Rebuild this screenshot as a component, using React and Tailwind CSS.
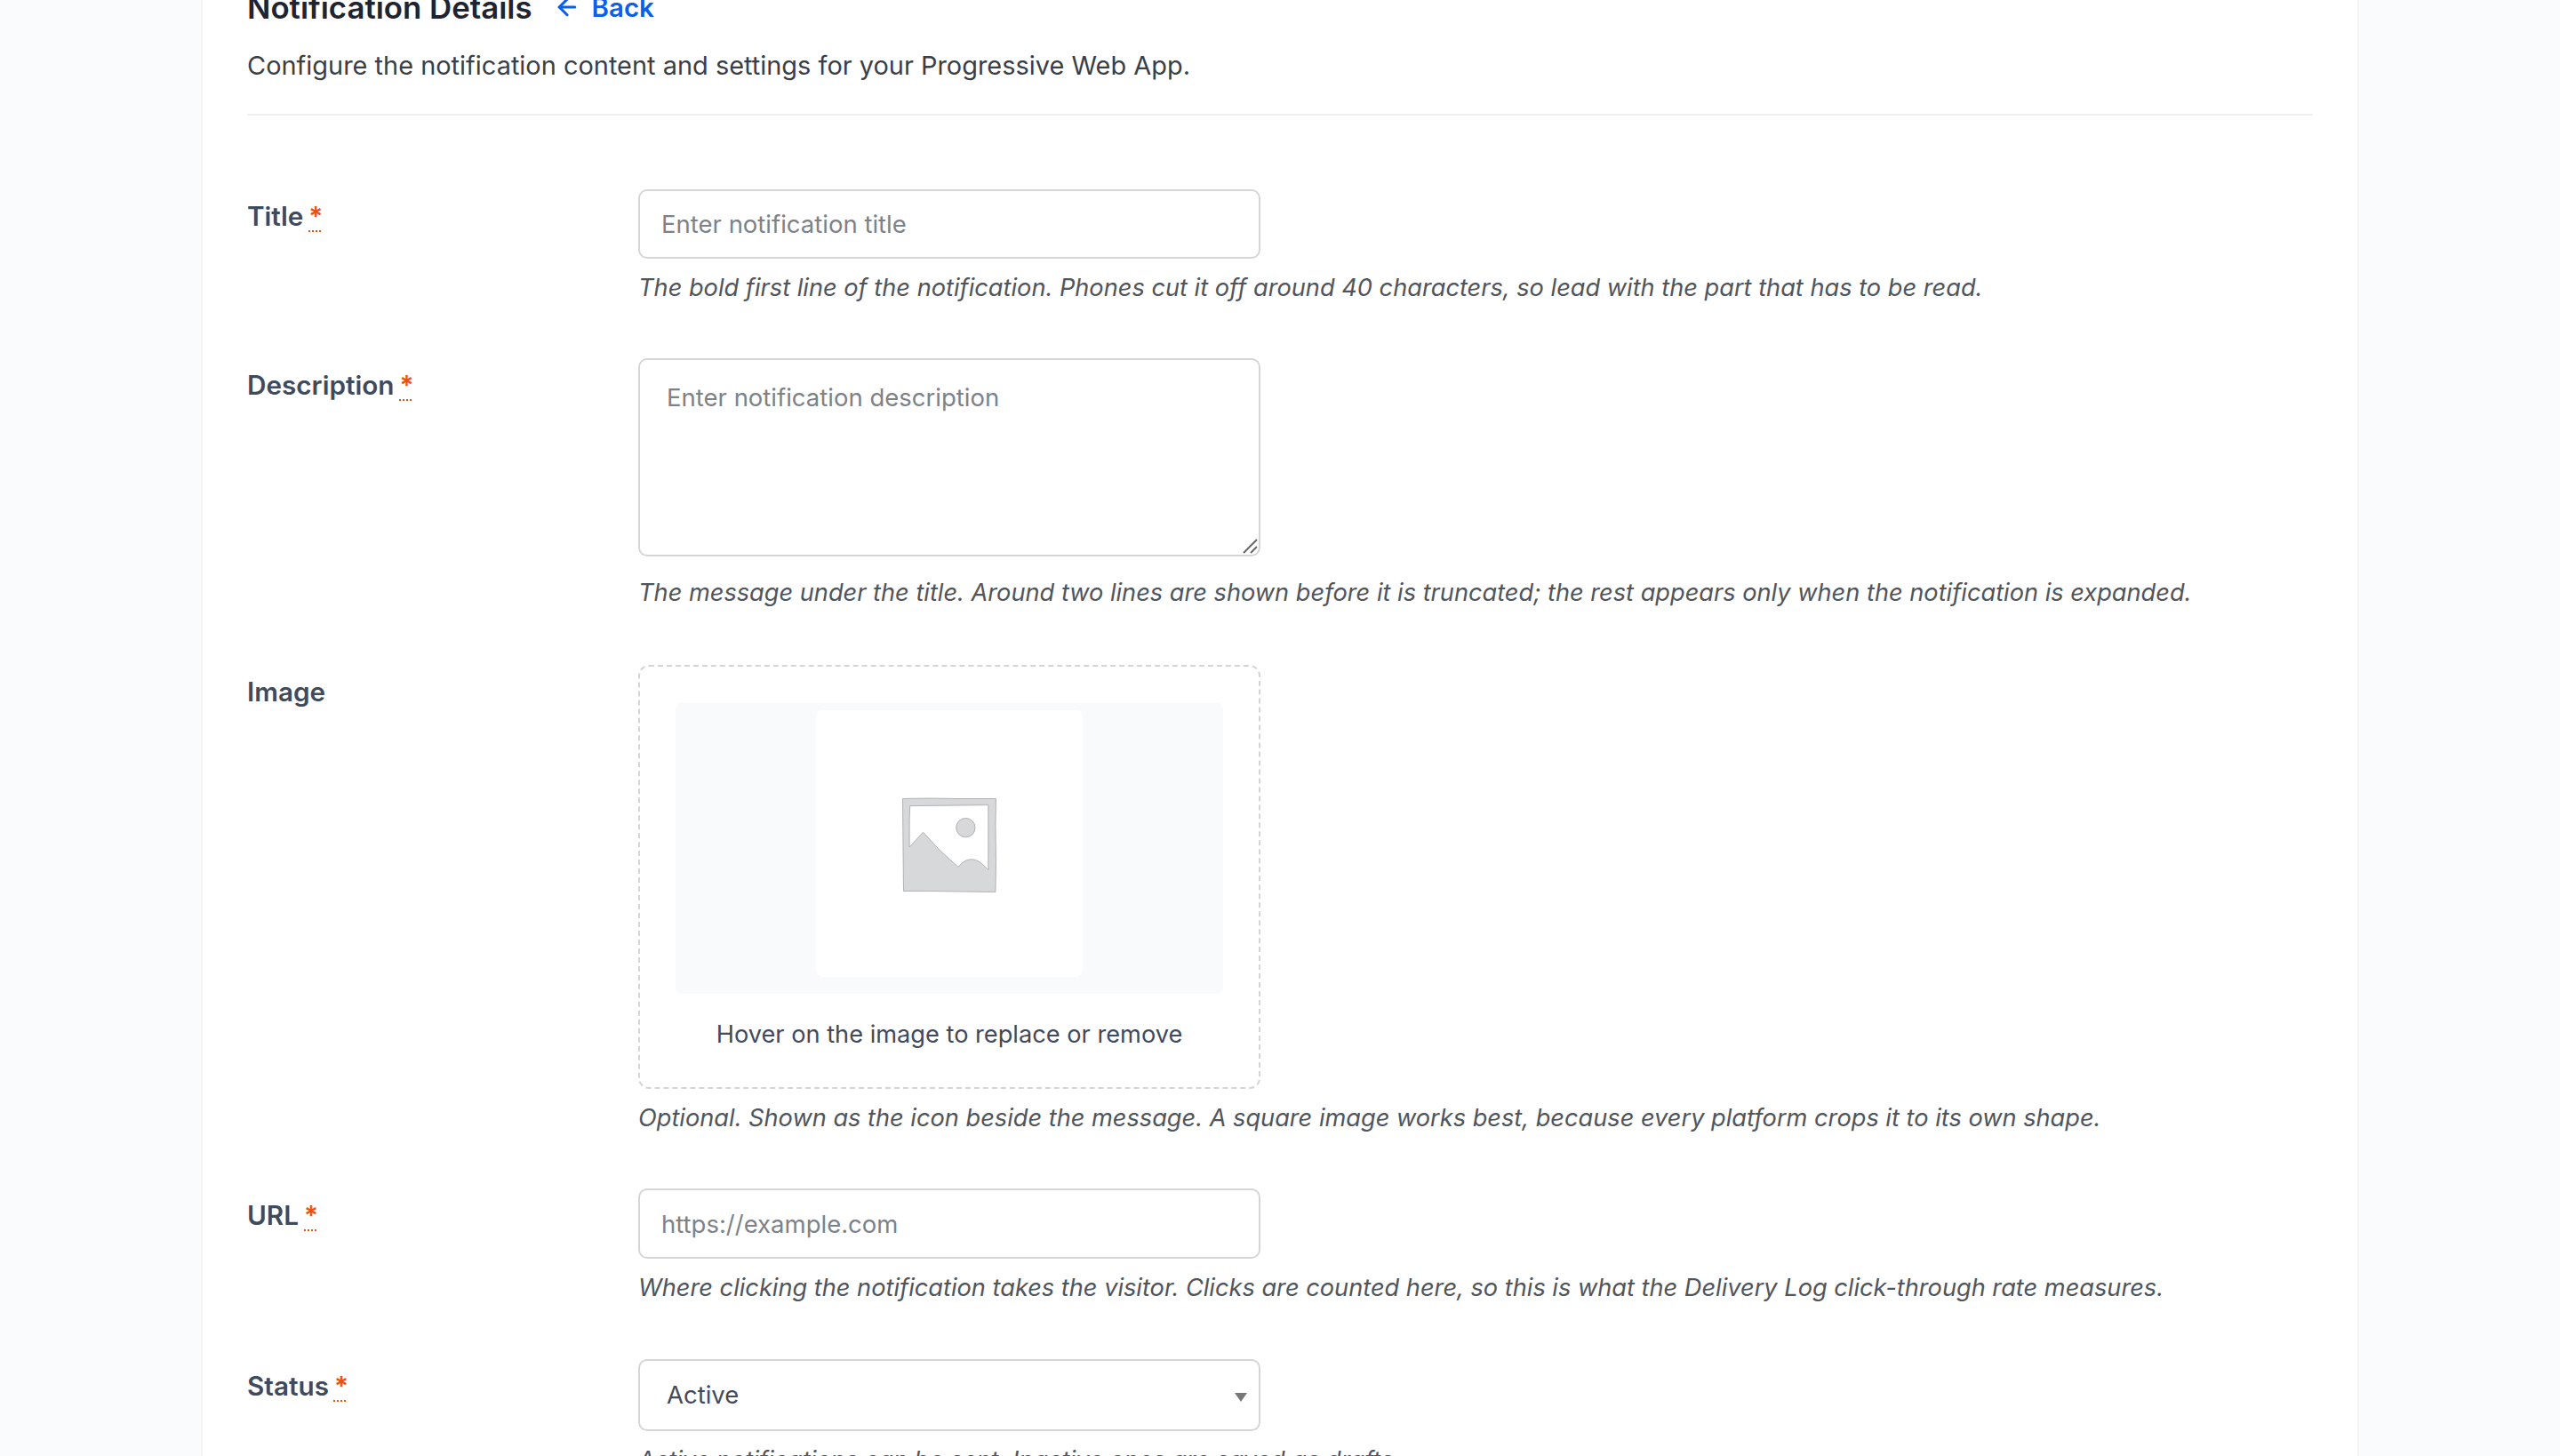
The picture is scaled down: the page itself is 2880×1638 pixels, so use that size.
import { ArrowLeft } from 'lucide-react'

const fontInter = { fontFamily: 'Inter, "Liberation Sans", sans-serif' }

const Required = () => (
  <abbr title="required" className="ml-[6px] text-[#f0500f] underline decoration-dotted decoration-2 underline-offset-[5px]">*</abbr>
)

const Row = ({ label, required, help, children, extra, pb = 'pb-[58px]' }) => (
  <div className="grid grid-cols-[440px_1fr]">
    <div className="pt-[10px] text-[29.7px] leading-[40px] font-semibold text-[#3f4a5c]">
      {label}
      {required && <Required />}
    </div>
    <div className={pb}>
      {children}
      <p className={`${extra ? 'mt-[18px]' : 'mt-[10px]'} text-[27.2px] leading-[46px] italic text-[#50555c]`}>{help}</p>
    </div>
  </div>
)

const inputClass =
  'block w-[700px] rounded-[10px] border-2 border-[#d4d5d7] bg-white px-[24px] text-[27.5px] text-[#3f4a5c] placeholder:text-[#7d8288] outline-none'

const PlaceholderIcon = () => (
  <svg viewBox="0 0 104 104" className="mt-[3px] w-[106px] h-[110px]">
    <path
      fillRule="evenodd"
      d="M0.5 0.5 L30 0 L60 0.5 L103.5 0.5 L103 30 L103.5 70 L103 103.5 L60 103 L30 102.5 L1.5 102.5 L1 60 Z M8.5 8.5 L8 24 L8 54 L23 37.5 L42 58 L62 76 C66 70 72 67 78 67.5 C84 68 90 74 95 79 L95 46 L95 7.5 L50 8 Z"
      fill="#d6d8da"
      stroke="#9b9da0"
      strokeWidth="0.7"
    />
    <circle cx="70" cy="32.5" r="10.5" fill="#d6d8da" stroke="#9b9da0" strokeWidth="0.7" />
  </svg>
)

export default function App() {
  return (
    <div className="h-[1638px] overflow-hidden bg-[#fafbfd]" style={fontInter}>
      <div className="mx-auto w-[2428px] h-[1660px] border-x-2 border-[#f5f5f6] bg-white px-[50px]">
        <div className="-mt-[16px] flex items-center h-[48px] gap-[24px]">
          <h2 className="text-[34.8px] leading-[48px] font-semibold text-[#1f2430]">Notification Details</h2>
          <a className="flex items-center gap-[13px] text-[29.5px] font-semibold text-[#0b5fe8]">
            <ArrowLeft className="w-[30px] h-[30px]" strokeWidth={2.5} />
            Back
          </a>
        </div>
        <p className="mt-[19px] text-[28.95px] leading-[46px] text-[#3a3f47]">
          Configure the notification content and settings for your Progressive Web App.
        </p>
        <div className="mt-[31px] h-[2px] bg-[#eeeff0]" />

        <div className="mt-[83px]">
          <Row
            label="Title"
            required
            pb="pb-[56px]"
            help="The bold first line of the notification. Phones cut it off around 40 characters, so lead with the part that has to be read."
          >
            <input className={`${inputClass} h-[78px]`} placeholder="Enter notification title" />
          </Row>

          <Row
            label="Description"
            required
            extra
            help="The message under the title. Around two lines are shown before it is truncated; the rest appears only when the notification is expanded."
          >
            <div className="relative w-[700px]">
              <textarea
                className={`${inputClass} h-[223px] pt-[24px] px-[30px] resize-none leading-[36px]`}
                placeholder="Enter notification description"
              />
              <svg viewBox="0 0 20 20" className="absolute right-[2px] bottom-[2px] w-[20px] h-[20px]" stroke="#666" strokeWidth="2">
                <path d="M3 18 L18 3" />
                <path d="M11 18 L18 11" />
              </svg>
            </div>
          </Row>

          <Row
            label="Image"
            pb="pb-[56px]"
            help="Optional. Shown as the icon beside the message. A square image works best, because every platform crops it to its own shape."
          >
            <div className="w-[700px] h-[477px] rounded-[12px] border-2 border-dashed border-[#d4d5d7] px-[40px] pt-[41px]">
              <div className="h-[327px] rounded-[6px] bg-[#f9fafc] flex items-start justify-center pt-[8px]">
                <div className="w-[300px] h-[300px] rounded-[8px] bg-white flex items-center justify-center">
                  <PlaceholderIcon />
                </div>
              </div>
              <p className="mt-[26px] text-center text-[27.2px] leading-[40px] text-[#3f4a5c]">Hover on the image to replace or remove</p>
            </div>
          </Row>

          <Row
            label="URL"
            required
            pb="pb-[57px]"
            help="Where clicking the notification takes the visitor. Clicks are counted here, so this is what the Delivery Log click-through rate measures."
          >
            <input className={`${inputClass} h-[79px]`} placeholder="https://example.com" />
          </Row>

          <Row
            label="Status"
            required
            help="Active notifications can be sent. Inactive ones are saved as drafts."
          >
            <div className="relative w-[700px]">
              <select className={`${inputClass} h-[81px] px-[30px] appearance-none`} defaultValue="Active">
                <option>Active</option>
                <option>Inactive</option>
              </select>
              <svg viewBox="0 0 14 10" className="absolute right-[15px] top-[38px] w-[14px] h-[10px]" fill="#777">
                <path d="M0 0 H14 L7 10 Z" />
              </svg>
            </div>
          </Row>
        </div>
      </div>
    </div>
  )
}
